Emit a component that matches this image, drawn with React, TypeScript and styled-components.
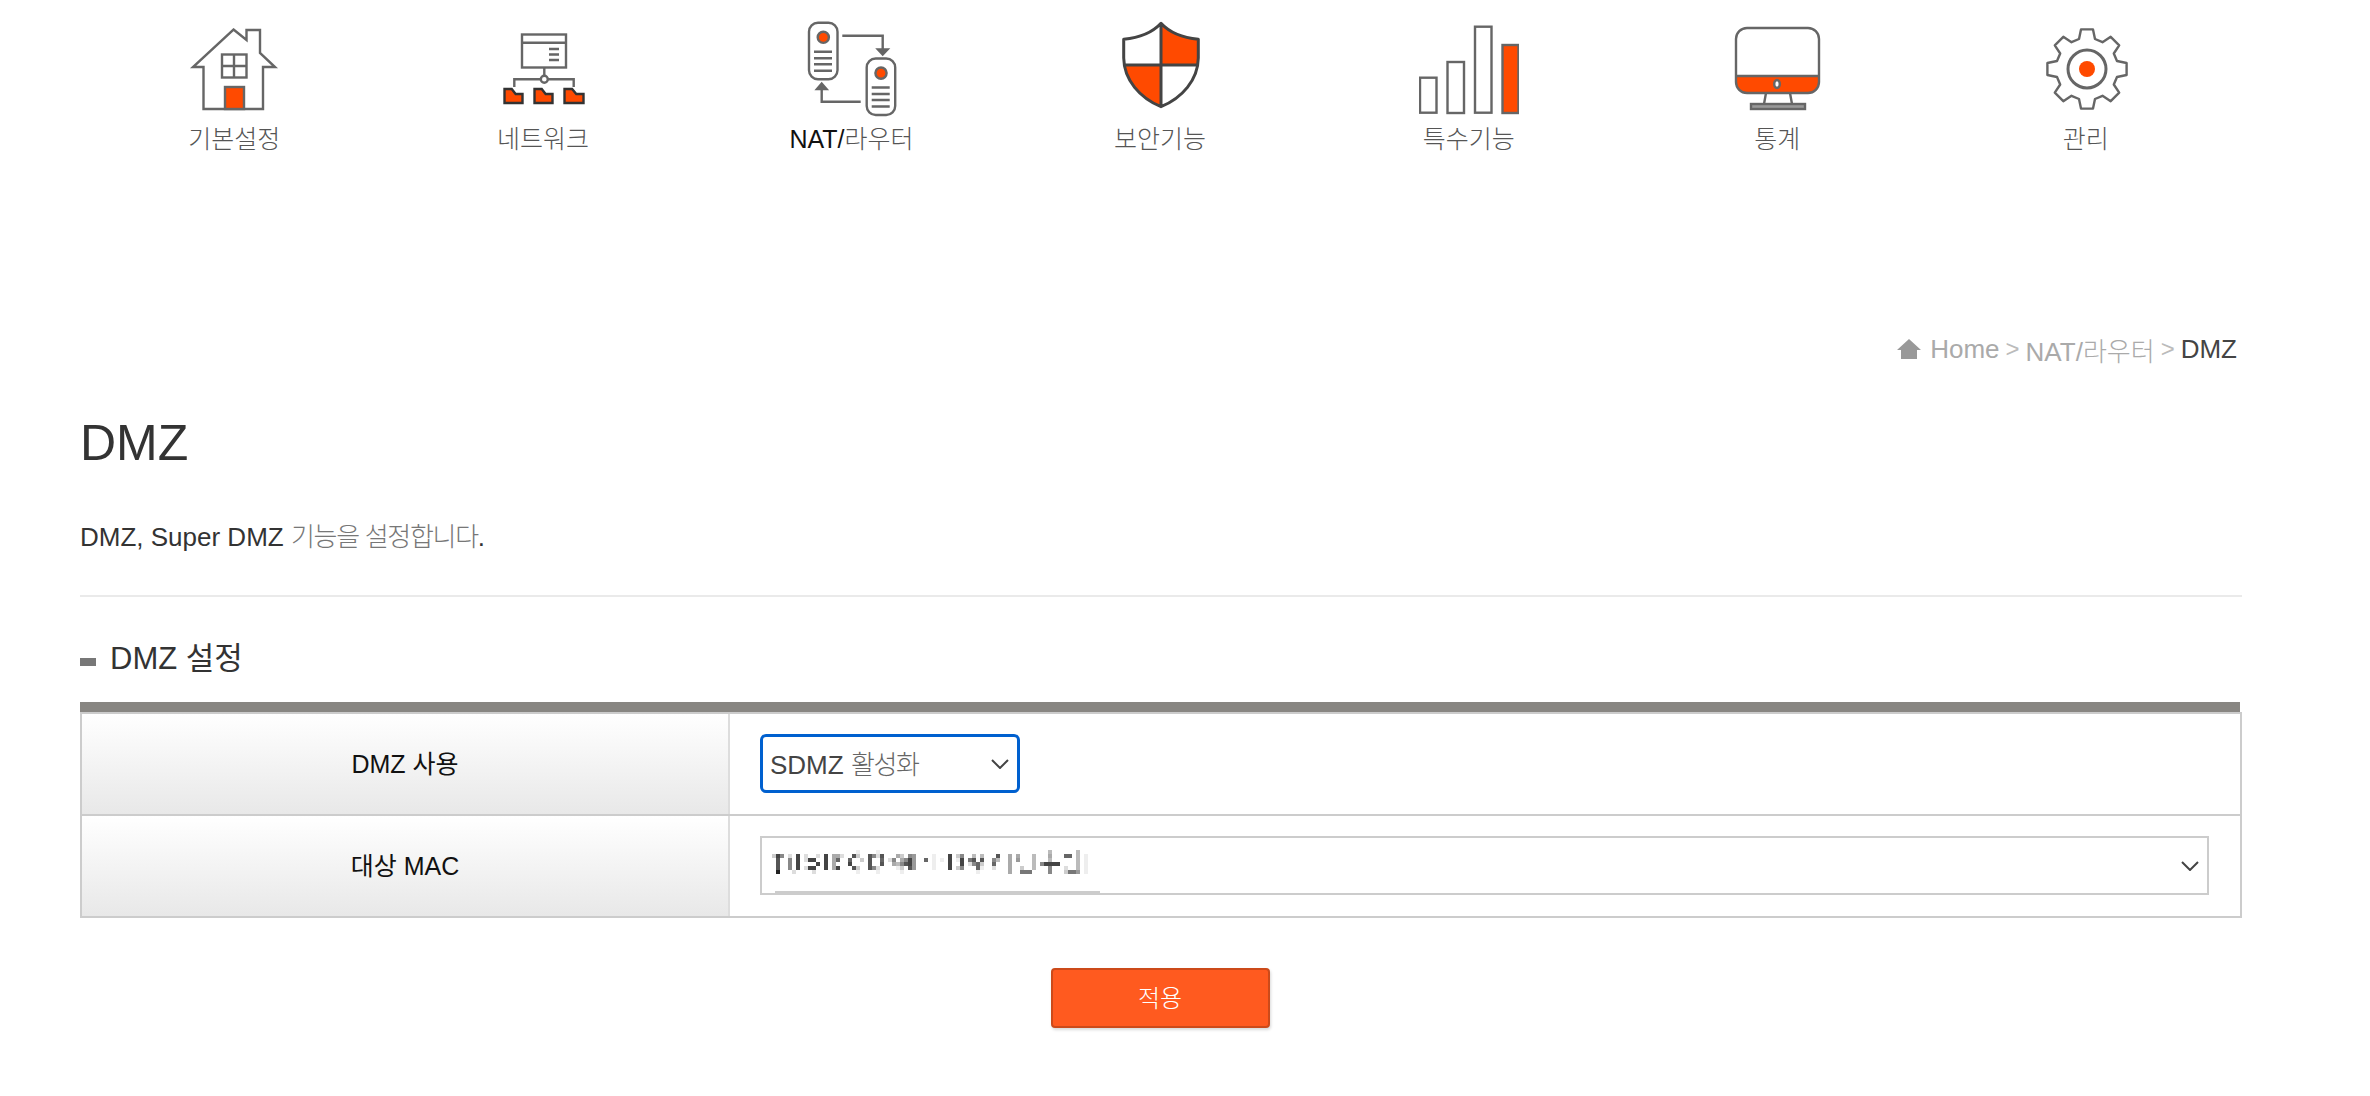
import React from 'react'
import styled, { createGlobalStyle } from 'styled-components'

const ORANGE = '#ff4a00'
const LINE = '#666'

const GlobalStyle = createGlobalStyle`
  html, body {
    margin: 0;
    padding: 0;
    background: #fff;
  }
  body {
    font-family: "Liberation Sans", "Noto Sans CJK KR", sans-serif;
    font-weight: 300;
    color: #333;
  }
`

const Page = styled.div`
  width: 2370px;
  height: 1096px;
  box-sizing: border-box;
  padding: 0 128px 0 80px;
  overflow: hidden;
`

const Nav = styled.nav`
  display: flex;
  padding-top: 20px;
`

const NavItem = styled.a`
  width: 308.6px;
  display: flex;
  flex-direction: column;
  align-items: center;
`

const NavLabel = styled.span`
  height: 36px;
  line-height: 38px;
  font-size: 25px;
  color: #555;
  white-space: nowrap;
`

const NavLatin = styled.span`
  color: #111;
`

const IconSvg = styled.svg`
  display: block;
  width: 100px;
  height: 100px;
  fill: none;
  stroke: ${LINE};
  stroke-width: 2.4;
`

const Breadcrumb = styled.div`
  margin-top: 175px;
  padding-right: 5px;
  height: 36px;
  display: flex;
  justify-content: flex-end;
  align-items: center;
  gap: 6px;
  font-size: 26px;
  color: #aaa;
`

const CrumbCurrent = styled.span`
  color: #444;
`

const CrumbSep = styled.span`
  font-size: 24px;
  color: #bbb;
`

const HomeMark = styled.svg`
  width: 24px;
  height: 22px;
  margin-right: 3px;
  fill: #999;
`

const Title = styled.h1`
  margin: 46px 0 0;
  height: 60px;
  line-height: 60px;
  font-size: 50px;
  font-weight: 400;
  color: #333;
`

const Description = styled.p`
  margin: 46px 0 0;
  height: 36px;
  line-height: 36px;
  font-size: 26px;
  color: #333;
`

const Hangul = styled.span`
  color: #777;
  letter-spacing: -1.3px;
`

const Divider = styled.hr`
  margin: 40px 0 0;
  border: 0;
  height: 2px;
  background: #eaeaea;
`

const SectionTitle = styled.h2`
  margin: 38px 0 0;
  height: 40px;
  display: flex;
  align-items: center;
  gap: 14px;
  font-size: 31px;
  font-weight: 400;
  color: #333;
`

const Bullet = styled.i`
  width: 16px;
  height: 8px;
  margin-top: 13px;
  background: #777;
`

const TableBar = styled.div`
  margin-top: 27px;
  height: 10px;
  width: 2160px;
  background: #888682;
`

const Table = styled.div`
  width: 2162px;
  box-sizing: border-box;
  border: 2px solid #ccc;
`

const Row = styled.div`
  display: flex;
  height: 100px;
  & + & {
    border-top: 2px solid #ccc;
  }
`

const HeadCell = styled.div`
  width: 648px;
  flex: none;
  box-sizing: border-box;
  padding-bottom: 4px;
  display: flex;
  align-items: center;
  justify-content: center;
  border-right: 2px solid #ddd;
  background: linear-gradient(#fff, #e8e8e8);
  font-size: 25px;
  font-weight: 400;
  color: #111;
`

const BodyCell = styled.div`
  flex: 1;
  display: flex;
  align-items: center;
  padding: 0 0 1px 30px;
`

const SelectBox = styled.div<{ $focused?: boolean }>`
  position: relative;
  box-sizing: border-box;
  display: flex;
  align-items: center;
  justify-content: space-between;
  width: ${(p) => (p.$focused ? '260px' : '1449px')};
  height: 59px;
  padding: 0 8px 0 ${(p) => (p.$focused ? '7px' : '10px')};
  border: ${(p) => (p.$focused ? '3px solid #0060cf' : '2px solid #ccc')};
  border-radius: ${(p) => (p.$focused ? '6px' : '0')};
  font-size: 26px;
  color: #444;
`

const SelectText = styled.span`
  padding-bottom: 3px;
`

const SelectHangul = styled.span`
  color: #666;
  letter-spacing: -1.4px;
`

const Smudge = styled.div`
  position: absolute;
  left: 13px;
  bottom: 0;
  width: 325px;
  height: 2px;
  background: #ccc;
`

const Mosaic = styled.svg`
  display: block;
  width: 320px;
  height: 28px;
  margin-top: -6px;
`

const Chevron = styled.svg`
  width: 18px;
  height: 10px;
  fill: none;
  stroke: #444;
  stroke-width: 2;
`

const Actions = styled.div`
  margin-top: 50px;
  padding-right: 2px;
  display: flex;
  justify-content: center;
`

const ApplyButton = styled.button`
  width: 219px;
  height: 60px;
  padding: 0 0 3px;
  border: 2px solid #cc4a1a;
  border-radius: 4px;
  background: #ff5a1f;
  box-shadow: 1px 2px 3px rgba(0, 0, 0, 0.15);
  color: #fff;
  font-family: inherit;
  font-size: 24px;
  font-weight: 300;
`

const HouseIcon = () => (
  <IconSvg viewBox="0 0 100 100">
    <path d="M49.5 9.5 L62.5 20 V10 H76 V33 L91 47 H79 V89 H19.5 V47 H9 Z" strokeLinejoin="miter" />
    <rect x="38" y="34.5" width="24.5" height="23" />
    <path d="M50 34.5 V57.5 M38 46 H62.5" />
    <rect x="41" y="67" width="19" height="22" fill={ORANGE} />
  </IconSvg>
)

const folder = (x: number, w: number) => `M${x} 69 H${x + w * 0.4} L${x + w * 0.62} 74 H${x + w} V83 H${x} Z`

const NetworkIcon = () => (
  <IconSvg viewBox="0 0 100 100">
    <rect x="29" y="14.5" width="44" height="33" />
    <path d="M29 22.7 H73 M56 29 H66 M56 34.5 H66 M56 40 H66" />
    <path d="M51.3 47.5 V56 M21.3 67 V59.3 H47.8 M54.8 59.3 H80.7 V67" />
    <circle cx="51.3" cy="59.3" r="3.5" />
    <path d={folder(11.5, 18)} fill={ORANGE} stroke="#333" />
    <path d={folder(41.5, 18)} fill={ORANGE} stroke="#333" />
    <path d={folder(71.5, 19)} fill={ORANGE} stroke="#333" />
  </IconSvg>
)

const ServerUnit = ({ x, y }: { x: number; y: number }) => (
  <g transform={`translate(${x} ${y})`}>
    <rect x="0" y="0" width="28.5" height="56.5" rx="9" />
    <circle cx="14.3" cy="14.6" r="5.6" fill={ORANGE} />
    <path d="M5 29 H23 M5 35.5 H23 M5 41.5 H23 M5 48 H23" />
  </g>
)

const RouterIcon = () => (
  <IconSvg viewBox="0 0 100 100">
    <ServerUnit x={8} y={2.7} />
    <ServerUnit x={65.7} y={38.5} />
    <path d="M41.3 15.7 H81.7 V30" />
    <path d="M77 29.5 H86.5 L81.7 34.5 Z" fill={LINE} />
    <path d="M59.7 81.7 H20.7 V68.5" />
    <path d="M16 69 H25.5 L20.7 63.5 Z" fill={LINE} />
  </IconSvg>
)

const ShieldIcon = () => (
  <IconSvg viewBox="0 0 100 100" strokeLinejoin="round">
    <path d="M51 3.3 C60 13 74 18 88.3 19.3 V38 C88.3 40.5 88 43 87.5 45 H51 Z" fill={ORANGE} stroke="none" />
    <path d="M15 45 H51 V86.7 C31 78 18 62 15 45 Z" fill={ORANGE} stroke="none" />
    <path d="M51 3.3 C42 13 28 18 13.7 19.3 V38 C14 60 30 78 51 86.7 C72 78 88 60 88.3 38 V19.3 C74 18 60 13 51 3.3 Z M51 3.3 V86.7 M15 45 H87.5" strokeWidth="3" stroke="#444" />
  </IconSvg>
)

const BarsIcon = () => (
  <IconSvg viewBox="0 0 100 100">
    <rect x="1" y="57.7" width="16.5" height="35" />
    <rect x="28.5" y="42" width="16.5" height="51" />
    <rect x="56" y="6.7" width="16.5" height="86" />
    <rect x="83.5" y="25" width="16" height="68" fill={ORANGE} />
  </IconSvg>
)

const MonitorIcon = () => (
  <IconSvg viewBox="2 0 100 100">
    <path d="M11 56 V61 C11 68 15 73 22 73 H83 C90 73 94 68 94 61 V56 Z" fill={ORANGE} stroke="none" />
    <rect x="11" y="8" width="83" height="65" rx="11" />
    <path d="M11 56 H94" />
    <ellipse cx="52" cy="64" rx="2.8" ry="4" fill="#fff" />
    <path d="M41 73 L39 84 M65 73 L67 84" />
    <rect x="26" y="84" width="54" height="5" fill="#999" />
  </IconSvg>
)

// 8 toothed outline, tooth points worked out from the centre
const gearPath = (cx: number, cy: number, outer: number, inner: number) => {
  const points: string[] = []
  for (let i = 0; i < 8; i++) {
    const a = (i * Math.PI) / 4 - Math.PI / 2
    const offsets: [number, number][] = [
      [inner, -0.26],
      [outer, -0.15],
      [outer, 0.15],
      [inner, 0.26],
    ]
    offsets.forEach(([r, d]) => {
      points.push(`${(cx + r * Math.cos(a + d)).toFixed(1)} ${(cy + r * Math.sin(a + d)).toFixed(1)}`)
    })
  }
  return `M${points.join(' L')} Z`
}

const GearIcon = () => (
  <IconSvg viewBox="0 0 100 100">
    <path d={gearPath(51, 49, 40, 31)} strokeLinejoin="round" />
    <circle cx="51" cy="49" r="19" strokeWidth="3" />
    <circle cx="51" cy="49" r="8" fill={ORANGE} stroke="none" />
  </IconSvg>
)

const NAV_ITEMS = [
  { label: '기본설정', icon: <HouseIcon /> },
  { label: '네트워크', icon: <NetworkIcon /> },
  { latin: 'NAT/', label: '라우터', icon: <RouterIcon /> },
  { label: '보안기능', icon: <ShieldIcon /> },
  { label: '특수기능', icon: <BarsIcon /> },
  { label: '통계', icon: <MonitorIcon /> },
  { label: '관리', icon: <GearIcon /> },
]

// the blurred out device name: [column, shade per row], one hex digit of grey, '.' is empty
const MOSAIC_COLUMNS: [number, string][] = [
  [0, '.c....'], [1, '.45552'], [2, '.8....'],
  [4, '.d888.'], [5, '.....d'], [6, '.4444.'],
  [8, '.dd.d.'], [9, '..4.4.'], [10, '..4.4d'], [11, '.d.4..'],
  [13, '.4444.'], [15, '.aaaa.'], [16, '.a6.4.'], [17, '.d....'],
  [19, '..64..'], [20, '.5..5.'], [21, 'ec..ce'], [22, '..c...'],
  [24, '.5555.'], [25, '.8..8.'], [26, 'ed..de'], [27, '.565..'],
  [29, '..d...'], [30, '..8a..'], [31, '.a.be.'], [32, '.ca8ce'],
  [33, '..85..'], [34, '.8445.'], [35, '.9999.'], [38, '..6...'],
  [40, '.eeee.'], [41, '.ffff.'], [42, '..e...'],
  [44, '.4444.'], [46, '.ce.c.'], [47, '.8448.'],
  [49, '..7d..'], [50, '.b58..'], [51, '...66e'], [52, '.b5ce.'],
  [55, '..86d.'], [56, '.5b...'],
  [59, '.aaaaa'], [61, '.a9...'], [62, '....c7'], [63, '.....7'], [64, '.....7'],
  [65, '.bbbb.'], [67, '...8..'], [68, '...4..'], [69, 'bab488'], [70, '...4..'], [71, '...4..'],
  [73, '.6..dc'], [74, '.6...7'], [75, '.....7'], [76, 'bbbbb9'], [78, '.eeeee'],
]

const DeviceMosaic = () => (
  <Mosaic viewBox="0 0 320 28" shapeRendering="crispEdges">
    {MOSAIC_COLUMNS.map(([col, shades]) =>
      shades.split('').map((s, row) =>
        s === '.' ? null : (
          <rect key={`${col}-${row}`} x={col * 4} y={row * 4 + 1} width="4" height="4" fill={`#${s}${s}${s}`} />
        ),
      ),
    )}
  </Mosaic>
)

const SelectChevron = () => (
  <Chevron viewBox="0 0 18 10">
    <path d="M1 1 L9 9 L17 1" />
  </Chevron>
)

export default function App() {
  return (
    <Page>
      <GlobalStyle />
      <Nav>
        {NAV_ITEMS.map((item) => (
          <NavItem key={item.label}>
            {item.icon}
            <NavLabel>
              {item.latin && <NavLatin>{item.latin}</NavLatin>}
              {item.label}
            </NavLabel>
          </NavItem>
        ))}
      </Nav>

      <Breadcrumb>
        <HomeMark viewBox="0 0 24 22">
          <path d="M12 1 L24 12 H20 V21 H4 V12 H0 Z" />
        </HomeMark>
        <span>Home</span>
        <CrumbSep>&gt;</CrumbSep>
        <span>NAT/라우터</span>
        <CrumbSep>&gt;</CrumbSep>
        <CrumbCurrent>DMZ</CrumbCurrent>
      </Breadcrumb>

      <Title>DMZ</Title>
      <Description>
        DMZ, Super DMZ <Hangul>기능을 설정합니다</Hangul>.
      </Description>
      <Divider />

      <SectionTitle>
        <Bullet />
        DMZ 설정
      </SectionTitle>

      <TableBar />
      <Table>
        <Row>
          <HeadCell>DMZ 사용</HeadCell>
          <BodyCell>
            <SelectBox $focused>
              <SelectText>
                SDMZ <SelectHangul>활성화</SelectHangul>
              </SelectText>
              <SelectChevron />
            </SelectBox>
          </BodyCell>
        </Row>
        <Row>
          <HeadCell>대상 MAC</HeadCell>
          <BodyCell>
            <SelectBox>
              <DeviceMosaic />
              <SelectChevron />
              <Smudge />
            </SelectBox>
          </BodyCell>
        </Row>
      </Table>

      <Actions>
        <ApplyButton>적용</ApplyButton>
      </Actions>
    </Page>
  )
}
